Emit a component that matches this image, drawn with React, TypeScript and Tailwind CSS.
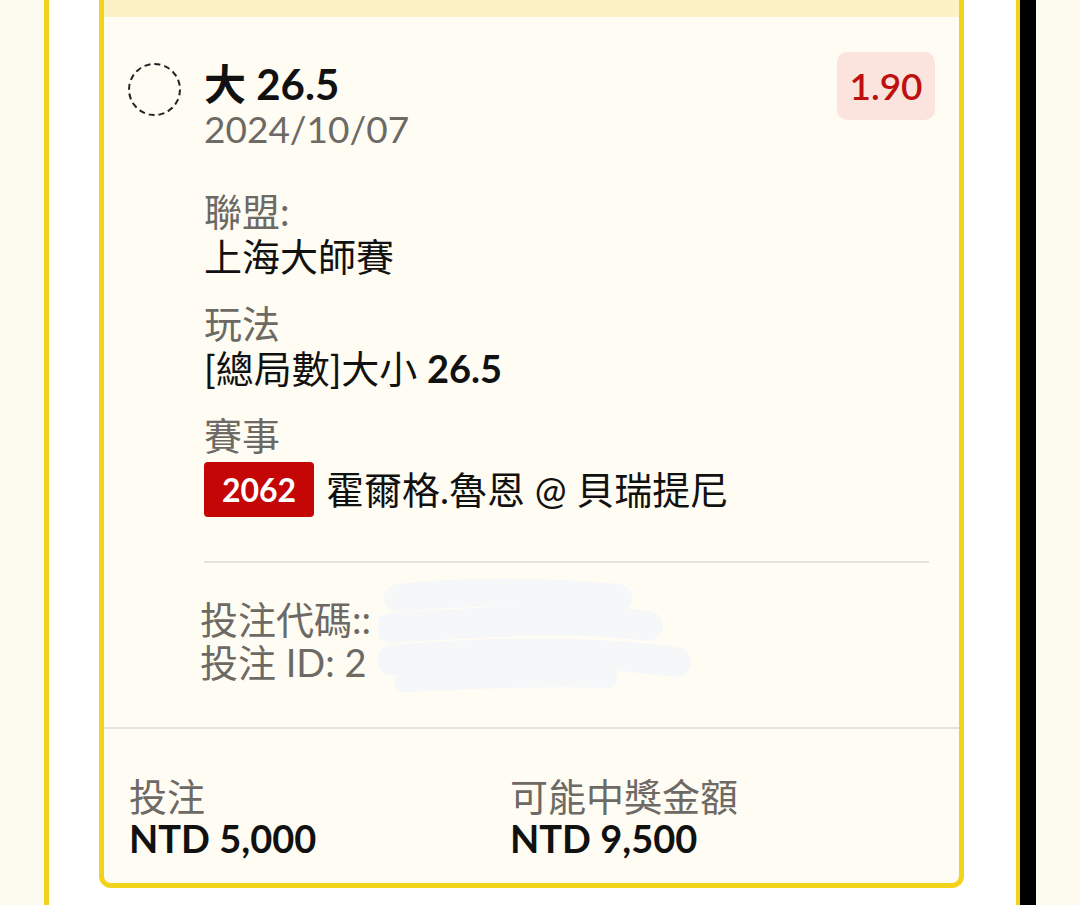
import React from 'react';

const font = { fontFamily: 'Lato, "Noto Sans CJK TC", "Noto Sans", sans-serif' };

const Field = ({ label, children, className = '' }: { label: string; children: React.ReactNode; className?: string }) => (
  <div className={className}>
    <div className="text-[38px] leading-[45px] text-[#6d6964]">{label}</div>
    <div className="text-[38px] leading-[45px] text-[#111]">{children}</div>
  </div>
);

const BetCard: React.FC = () => {
  return (
    <div className="flex flex-col border-x-[5px] border-b-[5px] border-[#f3d21b] rounded-b-[12px] bg-[#fffcf3] overflow-hidden">
      <div className="h-[17px] bg-[#fdf2c6]" />

      <div className="flex pl-[24px] pr-[24px] pb-[43px]">
        <div className="pt-[46px] pr-[23px]">
          <div className="w-[53px] h-[53px] rounded-full border-2 border-dashed border-[#222]" />
        </div>

        <div className="flex-1 min-w-0 pt-[44px]">
          <div className="flex items-start justify-between">
            <div>
              <div className="text-[42px] leading-[46px] font-bold text-[#111]">大 26.5</div>
              <div className="text-[37px] leading-[44px] text-[#6d6964]">2024/10/07</div>
            </div>
            <div className="-mt-[9px] w-[98px] h-[68px] flex items-center justify-center rounded-[10px] bg-[#fbe4de] text-[37px] font-semibold text-[#be1010]">
              1.90
            </div>
          </div>

          <Field label="聯盟:" className="mt-[38px]">上海大師賽</Field>
          <Field label="玩法" className="mt-[22px]">
            [總局數]大小 <span className="font-bold">26.5</span>
          </Field>

          <div className="mt-[22px]">
            <div className="text-[38px] leading-[45px] text-[#6d6964]">賽事</div>
            <div className="mt-[4px] flex items-center gap-[12px]">
              <span className="h-[55px] w-[110px] flex items-center justify-center rounded-[4px] bg-[#c40606] text-white text-[32px] font-bold">
                2062
              </span>
              <span className="text-[38px] leading-[45px] text-[#111]">霍爾格.魯恩 @ 貝瑞提尼</span>
            </div>
          </div>

          <div className="mt-[44px] mr-[6px] h-[2px] bg-[#e6e3dc]" />

          <div className="relative mt-[35px] -ml-[4px] text-[38px] leading-[43px] text-[#6d6964]">
            <div>投注代碼::</div>
            <div>投注 ID: 2</div>
            <svg className="absolute left-[178px] -top-[20px]" width="330" height="124" viewBox="0 0 330 124">
              <g stroke="#f6f7f9" strokeLinecap="round" fill="none">
                <path d="M20 20 C 90 12, 180 14, 240 20" strokeWidth="28" />
                <path d="M12 50 C 100 44, 200 38, 270 48" strokeWidth="30" />
                <path d="M14 82 C 110 74, 210 72, 298 84" strokeWidth="30" />
                <path d="M26 104 C 110 100, 180 98, 230 100" strokeWidth="20" />
              </g>
            </svg>
          </div>
        </div>
      </div>

      <div className="h-[2px] bg-[#e6e3dc]" />

      <div className="flex px-[25px] pt-[46px] pb-[24px]">
        <div className="w-[381px]">
          <div className="text-[38px] leading-[42px] text-[#6d6964]">投注</div>
          <div className="text-[38px] leading-[42px] font-bold text-[#111]">NTD 5,000</div>
        </div>
        <div>
          <div className="text-[38px] leading-[42px] text-[#6d6964]">可能中獎金額</div>
          <div className="text-[38px] leading-[42px] font-bold text-[#111]">NTD 9,500</div>
        </div>
      </div>
    </div>
  );
};

const App: React.FC = () => {
  return (
    <div className="flex w-[1080px] h-[905px] overflow-hidden bg-[#fdfaf0]" style={font}>
      <div className="w-[44px]" />
      <div className="w-[5px] bg-[#f3d21b]" />
      <div className="flex-1 bg-white pl-[50px] pr-[52px]">
        <BetCard />
      </div>
      <div className="w-[4px] bg-[#f3d21b]" />
      <div className="w-[16px] bg-black" />
      <div className="w-[44px]" />
    </div>
  );
};

export default App;
